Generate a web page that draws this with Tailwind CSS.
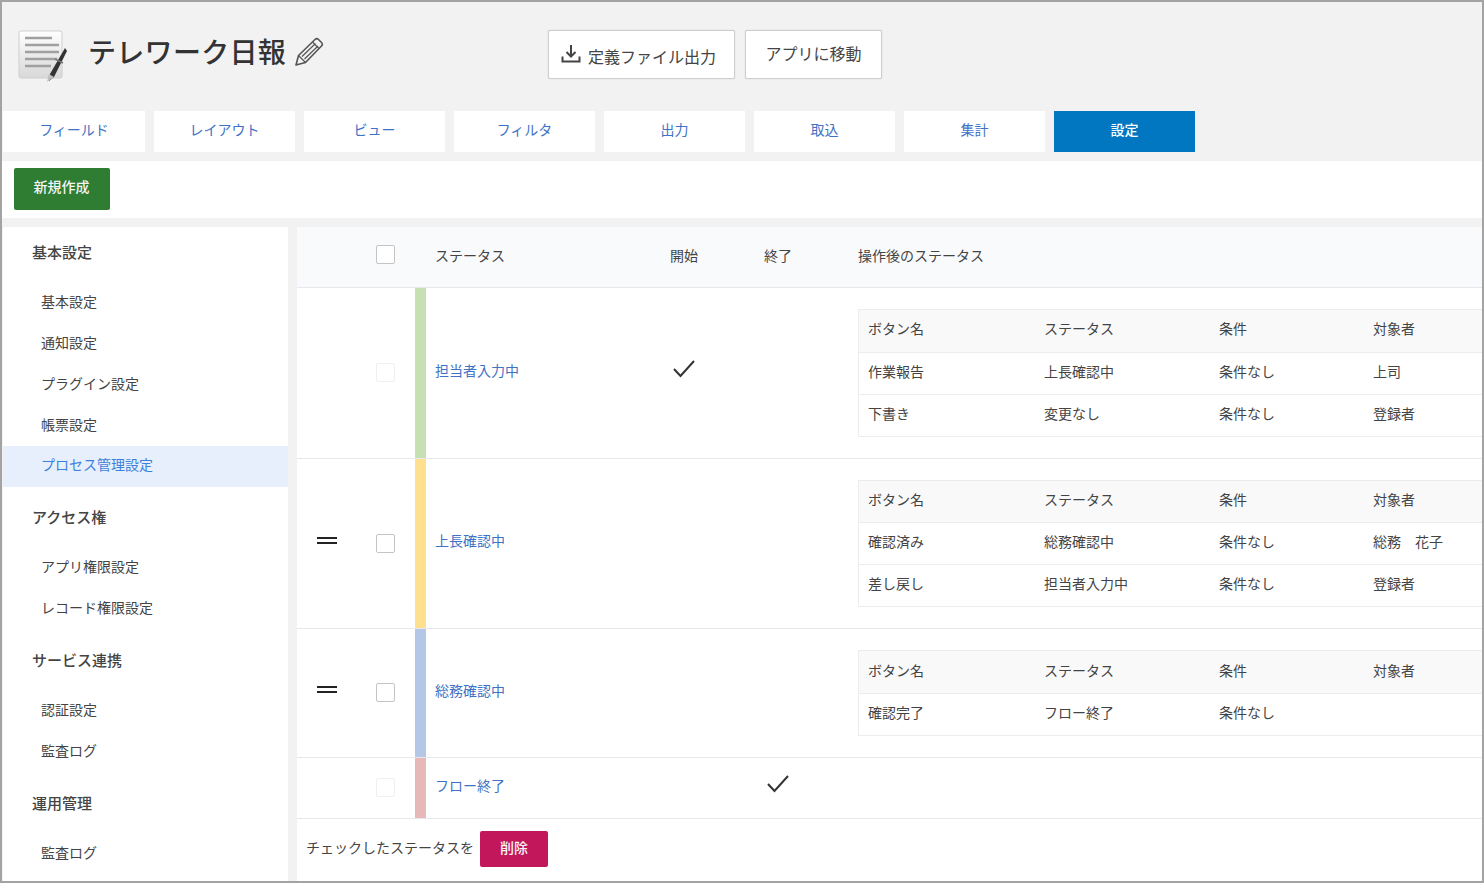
<!DOCTYPE html>
<html lang="ja">
<head>
  <meta charset="UTF-8" />
  <title>テレワーク日報</title>
  <script src="https://cdn.jsdelivr.net/npm/@tailwindcss/browser@4"></script>
</head>
<body class="h-[883px] w-[1484px] overflow-hidden bg-[#f2f2f2] font-['Noto_Sans_CJK_JP','Noto_Sans',sans-serif] text-[14px] text-[#444]">
<div class="flex h-[883px] flex-col overflow-hidden border-2 border-[#a3a3a3]">

  <!-- header -->
  <header class="flex h-[109px] shrink-0">
    <div class="flex w-[546px] items-start pl-[16px] pt-[26px]">
      <svg class="h-[54px] w-[50px] shrink-0" viewBox="0 0 50 54">
        <defs>
          <linearGradient id="paper" x1="0" y1="0" x2="0" y2="1">
            <stop offset="0" stop-color="#ffffff" />
            <stop offset="1" stop-color="#d8d8d8" />
          </linearGradient>
        </defs>
        <rect x="1" y="3" width="43" height="47" rx="2" fill="url(#paper)" stroke="#cfcfcf" />
        <path d="M7 10h27M7 17h34M7 24h34M7 31h32M7 38h26" stroke="#a0a0a0" stroke-width="2.500" />
        <path d="M47 20l2 3-13 26-5 4 1-7z" fill="#333" />
        <path d="M37 31l8 4" stroke="#777" stroke-width="1.500" />
        <path d="M31 46l-2 8 7-5z" fill="#bdbdbd" />
      </svg>
      <h1 class="ml-[20px] mt-[3px] text-[28px] font-medium leading-[40px] tracking-[0.3px] text-[#333]">テレワーク日報</h1>
      <svg class="ml-[8px] mt-[9px] h-[30px] w-[30px] shrink-0" viewBox="0 0 30 30" fill="none" stroke="#555" stroke-width="1.600" stroke-linejoin="round">
        <path d="M2 28l2.500-9.500L21 2.500a2.500 2.500 0 0 1 3.500 0l3 3a2.500 2.500 0 0 1 0 3.500L11.500 25.500z" />
        <path d="M4.500 18.500l7 7M18.500 5l6.500 6.500M8 19.500L21.500 6.500M10.500 22L24 9" stroke-width="1.200" />
      </svg>
    </div>
    <div class="flex items-start gap-[10px] pt-[28px]">
      <button class="flex h-[49px] w-[187px] items-center justify-center rounded-[2px] border border-[#cfcfcf] bg-white pr-[6px] text-[16px] text-[#444] shadow-[0_0_1px_#bbb]">
        <svg class="-mt-[2px] mr-[7px] h-[20px] w-[20px]" viewBox="0 0 20 20" fill="none" stroke="#444" stroke-width="2">
          <path d="M10 1v11M5.500 8l4.500 4.500L14.500 8M1.500 12.500v5h17v-5" />
        </svg>
        <span class="mt-[2px]">定義ファイル出力</span>
      </button>
      <button class="h-[49px] w-[137px] rounded-[2px] border border-[#cfcfcf] bg-white pb-[3px] text-[16px] text-[#444] shadow-[0_0_1px_#bbb]">アプリに移動</button>
    </div>
  </header>

  <!-- tabs -->
  <nav class="flex h-[50px] shrink-0 gap-[9px] pl-[1px]">
    <a class="flex h-[41px] w-[142px] items-center justify-center bg-white pb-[5px] text-[#3f72c4]">フィールド</a>
    <a class="flex h-[41px] w-[141px] items-center justify-center bg-white pb-[5px] text-[#3f72c4]">レイアウト</a>
    <a class="flex h-[41px] w-[141px] items-center justify-center bg-white pb-[5px] text-[#3f72c4]">ビュー</a>
    <a class="flex h-[41px] w-[141px] items-center justify-center bg-white pb-[5px] text-[#3f72c4]">フィルタ</a>
    <a class="flex h-[41px] w-[141px] items-center justify-center bg-white pb-[5px] text-[#3f72c4]">出力</a>
    <a class="flex h-[41px] w-[141px] items-center justify-center bg-white pb-[5px] text-[#3f72c4]">取込</a>
    <a class="flex h-[41px] w-[141px] items-center justify-center bg-white pb-[5px] text-[#3f72c4]">集計</a>
    <a class="flex h-[41px] w-[141px] items-center justify-center bg-[#0077c0] pb-[5px] font-medium text-white">設定</a>
  </nav>

  <!-- toolbar -->
  <div class="flex h-[57px] shrink-0 items-start bg-white pl-[12px] pt-[7px]">
    <button class="h-[42px] w-[96px] rounded-[2px] bg-[#2e7d32] pb-[6px] pr-[1px] font-medium text-[#f4f4f4]">新規作成</button>
  </div>

  <div class="flex min-h-0 flex-1 pt-[9px]">
    <!-- sidebar -->
    <aside class="ml-[1px] w-[285px] shrink-0 overflow-hidden rounded-tl-[2px] bg-white">
      <div class="flex h-[55px] items-center pb-[5px] pl-[29px] text-[15px] font-medium">基本設定</div>
      <div class="flex h-[41px] items-center pb-[2px] pl-[38px]">基本設定</div>
      <div class="flex h-[41px] items-center pb-[2px] pl-[38px]">通知設定</div>
      <div class="flex h-[41px] items-center pb-[2px] pl-[38px]">プラグイン設定</div>
      <div class="flex h-[41px] items-center pb-[2px] pl-[38px]">帳票設定</div>
      <div class="flex h-[41px] items-center bg-[#e6effb] pb-[4px] pl-[38px] text-[#3f7fdc]">プロセス管理設定</div>
      <div class="flex h-[60px] items-center pl-[29px] text-[15px] font-medium">アクセス権</div>
      <div class="flex h-[41px] items-center pb-[2px] pl-[38px]">アプリ権限設定</div>
      <div class="flex h-[41px] items-center pb-[2px] pl-[38px]">レコード権限設定</div>
      <div class="flex h-[61px] items-center pt-[2px] pl-[29px] text-[15px] font-medium">サービス連携</div>
      <div class="flex h-[41px] items-center pb-[2px] pl-[38px]">認証設定</div>
      <div class="flex h-[41px] items-center pb-[2px] pl-[38px]">監査ログ</div>
      <div class="flex h-[61px] items-center pt-[2px] pl-[29px] text-[15px] font-medium">運用管理</div>
      <div class="flex h-[41px] items-center pb-[2px] pl-[38px]">監査ログ</div>
    </aside>

    <!-- status table -->
    <main class="ml-[9px] min-w-0 flex-1 overflow-hidden bg-white">
      <div class="flex h-[61px] items-center border-b border-[#e6e8ee] bg-[#f9fafb]">
        <span class="mb-[5px] ml-[79px] h-[19px] w-[19px] rounded-[2px] border border-[#c4c4c4] bg-white"></span>
        <span class="ml-[40px] w-[235px] pb-[3px]">ステータス</span>
        <span class="w-[94px] pb-[3px]">開始</span>
        <span class="w-[94px] pb-[3px]">終了</span>
        <span class="pb-[3px]">操作後のステータス</span>
      </div>

      <!-- row 1 -->
      <div class="flex h-[171px] items-stretch border-b border-[#e6e8ee]">
        <div class="ml-[79px] flex w-[19px] items-center pb-[2px]"><span class="h-[19px] w-[19px] rounded-[2px] border border-[#f0f0f0]"></span></div>
        <div class="ml-[20px] w-[11px] bg-[#c6e0b4]"></div>
        <div class="ml-[9px] flex w-[235px] items-center pb-[6px] text-[#3f72c4]">担当者入力中</div>
        <div class="flex w-[94px] items-center pb-[8px]">
          <svg class="ml-[3px] h-[20px] w-[22px]" viewBox="0 0 22 20" fill="none" stroke="#333" stroke-width="2"><path d="M1 10l6.500 7L21 2" /></svg>
        </div>
        <div class="w-[94px]"></div>
        <div class="min-w-0 flex-1 pt-[21px]">
          <div class="w-[640px] border border-[#ececec]">
            <div class="flex h-[42px] items-center bg-[#f9f9f9] pb-[5px] pl-[9px]"><span class="w-[176px]">ボタン名</span><span class="w-[175px]">ステータス</span><span class="w-[154px]">条件</span><span>対象者</span></div>
            <div class="flex h-[42px] items-center border-t border-[#ececec] pb-[5px] pl-[9px]"><span class="w-[176px]">作業報告</span><span class="w-[175px]">上長確認中</span><span class="w-[154px]">条件なし</span><span>上司</span></div>
            <div class="flex h-[42px] items-center border-t border-[#ececec] pb-[5px] pl-[9px]"><span class="w-[176px]">下書き</span><span class="w-[175px]">変更なし</span><span class="w-[154px]">条件なし</span><span>登録者</span></div>
          </div>
        </div>
      </div>

      <!-- row 2 -->
      <div class="flex h-[170px] items-stretch border-b border-[#e6e8ee]">
        <div class="ml-[20px] flex w-[59px] items-center pb-[6px]"><span class="h-[7px] w-[20px] border-y-2 border-[#222]"></span></div>
        <div class="flex w-[19px] items-center"><span class="h-[19px] w-[19px] rounded-[2px] border border-[#c4c4c4]"></span></div>
        <div class="ml-[20px] w-[11px] bg-[#ffe08f]"></div>
        <div class="ml-[9px] flex w-[235px] items-center pb-[6px] text-[#3f72c4]">上長確認中</div>
        <div class="w-[188px]"></div>
        <div class="min-w-0 flex-1 pt-[21px]">
          <div class="w-[640px] border border-[#ececec]">
            <div class="flex h-[41px] items-center bg-[#f9f9f9] pb-[5px] pl-[9px]"><span class="w-[176px]">ボタン名</span><span class="w-[175px]">ステータス</span><span class="w-[154px]">条件</span><span>対象者</span></div>
            <div class="flex h-[42px] items-center border-t border-[#ececec] pb-[5px] pl-[9px]"><span class="w-[176px]">確認済み</span><span class="w-[175px]">総務確認中</span><span class="w-[154px]">条件なし</span><span>総務　花子</span></div>
            <div class="flex h-[42px] items-center border-t border-[#ececec] pb-[5px] pl-[9px]"><span class="w-[176px]">差し戻し</span><span class="w-[175px]">担当者入力中</span><span class="w-[154px]">条件なし</span><span>登録者</span></div>
          </div>
        </div>
      </div>

      <!-- row 3 -->
      <div class="flex h-[129px] items-stretch border-b border-[#e6e8ee]">
        <div class="ml-[20px] flex w-[59px] items-center pb-[8px]"><span class="h-[7px] w-[20px] border-y-2 border-[#222]"></span></div>
        <div class="flex w-[19px] items-center pb-[2px]"><span class="h-[19px] w-[19px] rounded-[2px] border border-[#c4c4c4]"></span></div>
        <div class="ml-[20px] w-[11px] bg-[#b4c7e7]"></div>
        <div class="ml-[9px] flex w-[235px] items-center pb-[6px] text-[#3f72c4]">総務確認中</div>
        <div class="w-[188px]"></div>
        <div class="min-w-0 flex-1 pt-[21px]">
          <div class="w-[640px] border border-[#ececec]">
            <div class="flex h-[42px] items-center bg-[#f9f9f9] pb-[4px] pl-[9px]"><span class="w-[176px]">ボタン名</span><span class="w-[175px]">ステータス</span><span class="w-[154px]">条件</span><span>対象者</span></div>
            <div class="flex h-[42px] items-center border-t border-[#ececec] pb-[5px] pl-[9px]"><span class="w-[176px]">確認完了</span><span class="w-[175px]">フロー終了</span><span class="w-[154px]">条件なし</span><span></span></div>
          </div>
        </div>
      </div>

      <!-- row 4 -->
      <div class="flex h-[61px] items-stretch border-b border-[#e6e8ee]">
        <div class="ml-[79px] flex w-[19px] items-center pb-[2px]"><span class="h-[19px] w-[19px] rounded-[2px] border border-[#f0f0f0]"></span></div>
        <div class="ml-[20px] w-[11px] bg-[#e6b8b7]"></div>
        <div class="ml-[9px] flex w-[235px] items-center pb-[6px] text-[#3f72c4]">フロー終了</div>
        <div class="w-[94px]"></div>
        <div class="flex w-[94px] items-center pb-[8px]">
          <svg class="ml-[3px] h-[20px] w-[22px]" viewBox="0 0 22 20" fill="none" stroke="#333" stroke-width="2"><path d="M1 10l6.500 7L21 2" /></svg>
        </div>
      </div>

      <!-- footer -->
      <div class="flex items-center pl-[9px] pt-[12px]">
        <span class="w-[174px] pb-[3px]">チェックしたステータスを</span>
        <button class="h-[36px] w-[68px] rounded-[2px] bg-[#c2185b] pb-[3px] font-medium text-[#f6f6f6]">削除</button>
      </div>
    </main>
  </div>
</div>
</body>
</html>
